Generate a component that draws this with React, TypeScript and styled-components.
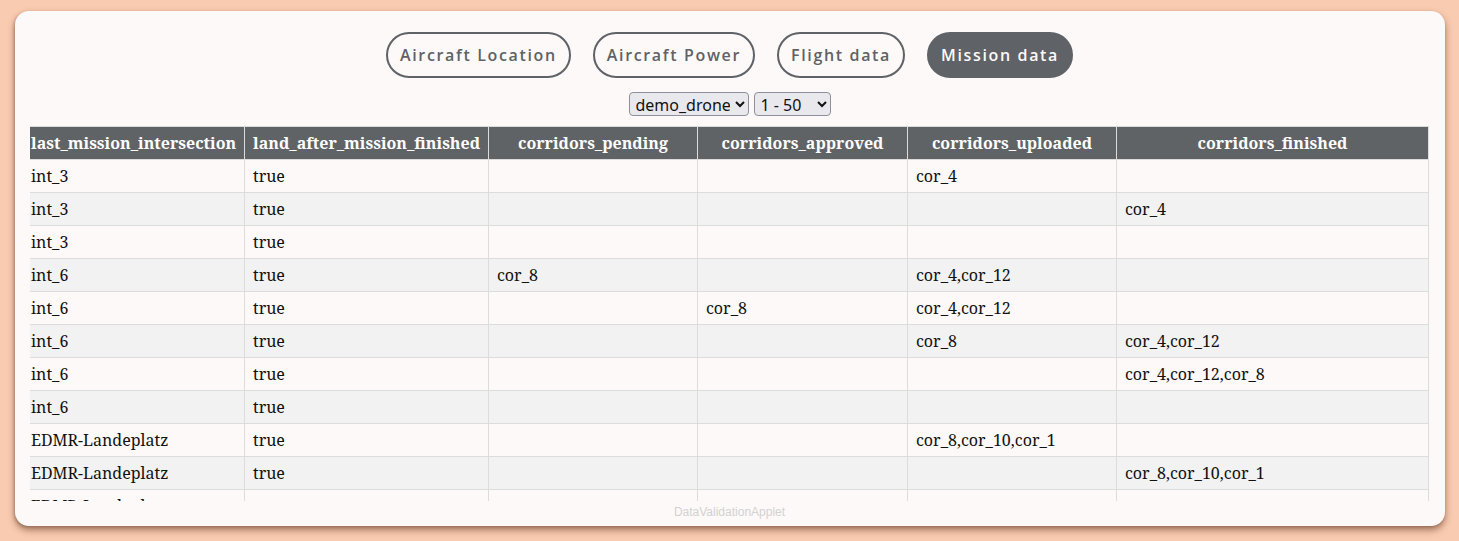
import React, { useLayoutEffect, useRef, useState } from "react";
import styled, { createGlobalStyle, css } from "styled-components";

const GlobalStyle = createGlobalStyle`
  html, body {
    margin: 0;
    padding: 0;
    background: #f9cbb0;
  }
  body {
    width: 1459px;
    height: 541px;
    overflow: hidden;
  }
`;

const Page = styled.div`
  box-sizing: border-box;
  width: 1459px;
  height: 541px;
  padding: 11px 14px 15px 15px;
`;

const Card = styled.div`
  box-sizing: border-box;
  height: 515px;
  background: #fdf9f8;
  border-radius: 14px;
  box-shadow: 0 4px 7px rgba(90, 50, 30, 0.55), -1px 1px 3px rgba(90, 50, 30, 0.25);
  padding: 21px 16px 0 15px;
  display: flex;
  flex-direction: column;
  align-items: stretch;
`;

const TabBar = styled.div`
  display: flex;
  justify-content: center;
  gap: 22px;
`;

const TabButton = styled.button<{ $active?: boolean }>`
  box-sizing: border-box;
  height: 46px;
  padding: 0 12px;
  border-radius: 23px;
  border: 2px solid #5f6266;
  background: transparent;
  color: #5f6266;
  font-family: "Open Sans", "Noto Sans", sans-serif;
  font-weight: 600;
  font-size: 16px;
  letter-spacing: 1.65px;
  cursor: pointer;
  ${(p) =>
    p.$active &&
    css`
      background: #5f6266;
      color: #fdf9f8;
    `}
`;

const SelectRow = styled.div`
  display: flex;
  justify-content: center;
  gap: 5px;
  margin-top: 14px;
`;

const Select = styled.select<{ $w: number }>`
  box-sizing: border-box;
  height: 24px;
  width: ${(p) => p.$w}px;
  font-family: "Noto Sans", "DejaVu Sans", sans-serif;
  font-size: 16px;
  color: #111;
  background: #e9e9ed;
  border: 1px solid #8f8f9d;
  border-radius: 4px;
  padding: 0 2px;
`;

const TableScroll = styled.div`
  margin-top: 10px;
  height: 375px;
  overflow: hidden;
`;

const Table = styled.table`
  border-collapse: collapse;
  table-layout: fixed;
  font-family: "Noto Serif", "DejaVu Serif", serif;
  font-size: 16px;
  color: #111;
`;

const HeadCell = styled.th`
  box-sizing: border-box;
  height: 33px;
  background: #606366;
  color: #fdfdfd;
  font-weight: 700;
  text-align: center;
  border: 1px solid #dcdcdc;
  padding: 0 8px;
  white-space: nowrap;
  overflow: hidden;
`;

const Row = styled.tr<{ $even: boolean }>`
  background: ${(p) => (p.$even ? "#f2f2f2" : "#fdf9f8")};
`;

const Cell = styled.td`
  box-sizing: border-box;
  height: 33px;
  border: 1px solid #dcdcdc;
  padding: 0 8px;
  text-align: left;
  white-space: nowrap;
  overflow: hidden;
`;

const Footer = styled.div`
  text-align: center;
  font-family: "Liberation Sans", Arial, sans-serif;
  font-size: 12px;
  color: #d2d2d2;
  margin-top: 4px;
`;

const columns: { key: string; width: number }[] = [
  { key: "timestamp", width: 200 },
  { key: "aircraft_id", width: 160 },
  { key: "mission_state", width: 181 },
  { key: "last_mission_intersection", width: 222 },
  { key: "land_after_mission_finished", width: 244 },
  { key: "corridors_pending", width: 209 },
  { key: "corridors_approved", width: 210 },
  { key: "corridors_uploaded", width: 209 },
  { key: "corridors_finished", width: 312 },
];

const rows: string[][] = [
  ["1715000001", "demo_drone", "active", "int_3", "true", "", "", "cor_4", ""],
  ["1715000002", "demo_drone", "active", "int_3", "true", "", "", "", "cor_4"],
  ["1715000003", "demo_drone", "active", "int_3", "true", "", "", "", ""],
  ["1715000004", "demo_drone", "active", "int_6", "true", "cor_8", "", "cor_4,cor_12", ""],
  ["1715000005", "demo_drone", "active", "int_6", "true", "", "cor_8", "cor_4,cor_12", ""],
  ["1715000006", "demo_drone", "active", "int_6", "true", "", "", "cor_8", "cor_4,cor_12"],
  ["1715000007", "demo_drone", "active", "int_6", "true", "", "", "", "cor_4,cor_12,cor_8"],
  ["1715000008", "demo_drone", "active", "int_6", "true", "", "", "", ""],
  ["1715000009", "demo_drone", "active", "EDMR-Landeplatz", "true", "", "", "cor_8,cor_10,cor_1", ""],
  ["1715000010", "demo_drone", "active", "EDMR-Landeplatz", "true", "", "", "", "cor_8,cor_10,cor_1"],
  ["1715000011", "demo_drone", "active", "EDMR-Landeplatz", "true", "", "", "", ""],
  ["1715000012", "demo_drone", "idle", "EDMR-Landeplatz", "true", "", "", "", ""],
];

const tabs = ["Aircraft Location", "Aircraft Power", "Flight data", "Mission data"];

export default function App() {
  const [active, setActive] = useState(3);
  const scrollRef = useRef<HTMLDivElement>(null);
  const total = columns.reduce((s, c) => s + c.width, 0);

  useLayoutEffect(() => {
    const el = scrollRef.current;
    if (el) el.scrollLeft = el.scrollWidth - el.clientWidth;
  }, []);

  return (
    <>
      <GlobalStyle />
      <Page>
        <Card>
          <TabBar>
            {tabs.map((t, i) => (
              <TabButton key={t} $active={i === active} onClick={() => setActive(i)}>
                {t}
              </TabButton>
            ))}
          </TabBar>
          <SelectRow>
            <Select $w={120} defaultValue="demo_drone">
              <option value="demo_drone">demo_drone</option>
            </Select>
            <Select $w={77} defaultValue="1">
              <option value="1">1 - 50</option>
              <option value="2">51 - 100</option>
            </Select>
          </SelectRow>
          <TableScroll ref={scrollRef}>
            <Table style={{ width: total }}>
              <colgroup>
                {columns.map((c) => (
                  <col key={c.key} style={{ width: c.width }} />
                ))}
              </colgroup>
              <thead>
                <tr>
                  {columns.map((c) => (
                    <HeadCell key={c.key}>{c.key}</HeadCell>
                  ))}
                </tr>
              </thead>
              <tbody>
                {rows.map((r, i) => (
                  <Row key={i} $even={i % 2 === 1}>
                    {r.map((v, j) => (
                      <Cell key={j}>{v}</Cell>
                    ))}
                  </Row>
                ))}
              </tbody>
            </Table>
          </TableScroll>
          <Footer>DataValidationApplet</Footer>
        </Card>
      </Page>
    </>
  );
}
